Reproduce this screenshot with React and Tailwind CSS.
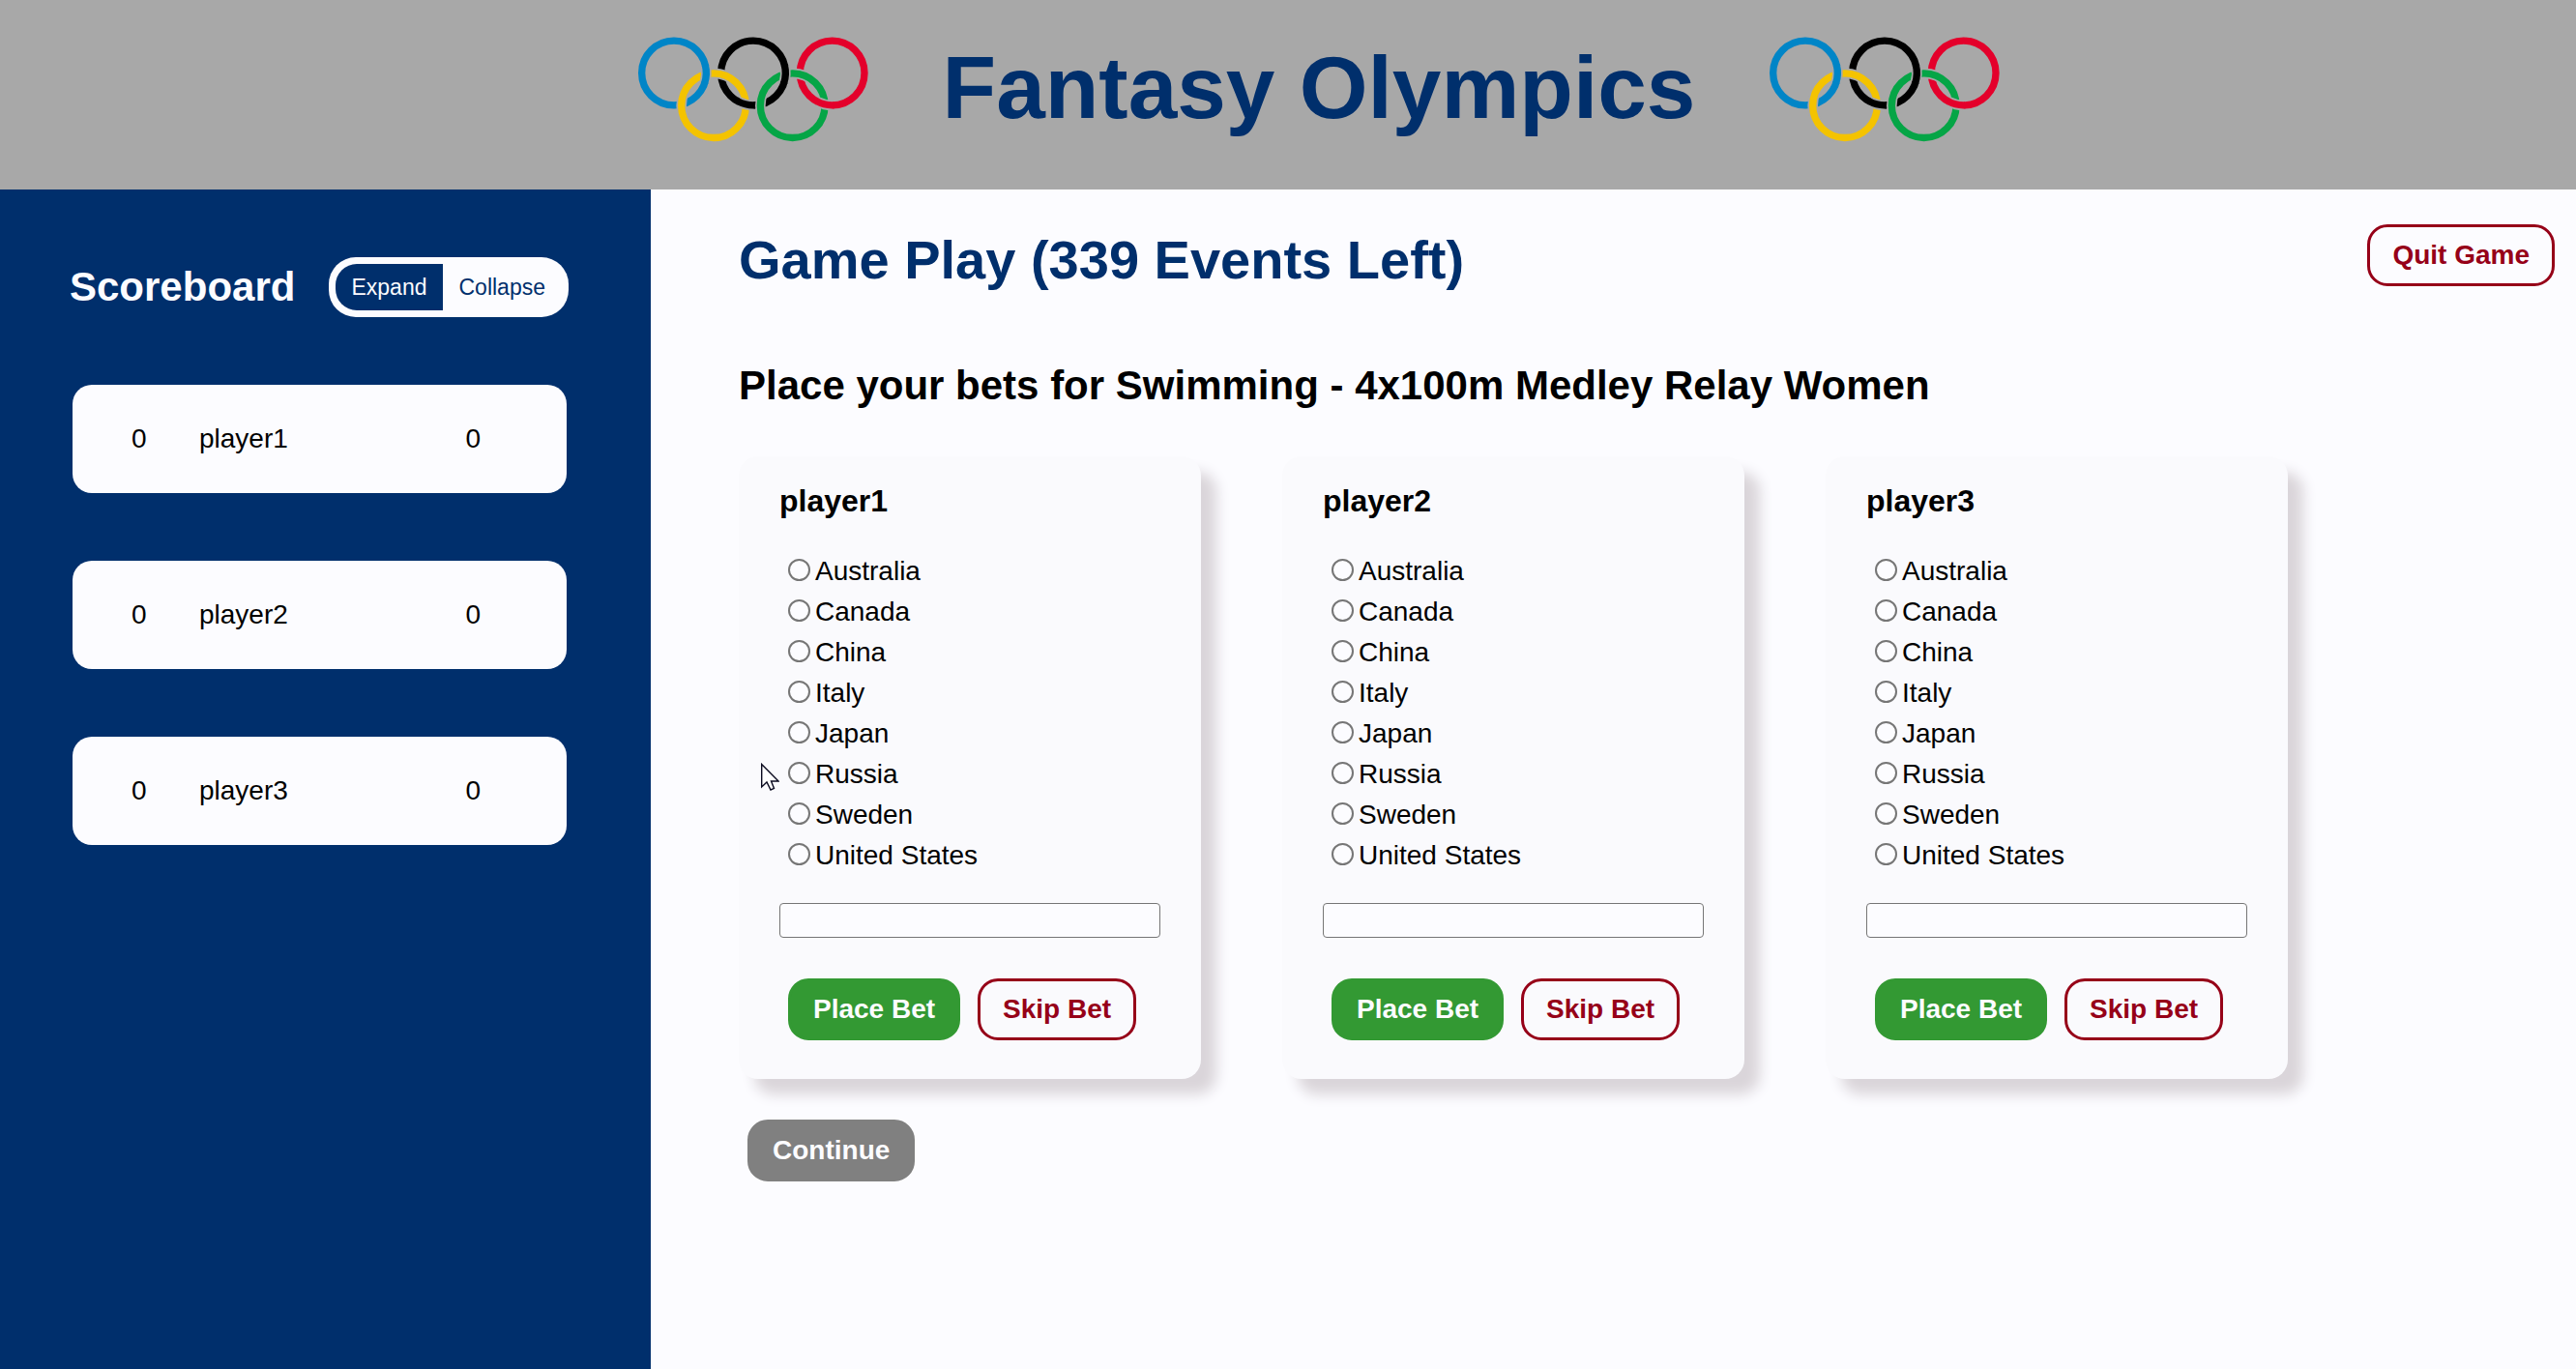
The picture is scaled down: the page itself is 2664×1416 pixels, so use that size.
import { useState } from "react";

const COUNTRIES = ["Australia", "Canada", "China", "Italy", "Japan", "Russia", "Sweden", "United States"];

const PLAYERS = [
  { name: "player1", rank: 0, score: 0 },
  { name: "player2", rank: 0, score: 0 },
  { name: "player3", rank: 0, score: 0 },
];

const HEADER_GREY = "#a8a8a8";

function arc(cx, cy, from, to) {
  const r = 100;
  const point = (deg) => {
    const a = (deg * Math.PI) / 180;
    return `${(cx + r * Math.cos(a)).toFixed(2)} ${(cy + r * Math.sin(a)).toFixed(2)}`;
  };
  return `M${point(from)}A${r} ${r} 0 0 1 ${point(to)}`;
}

// Segment of a ring that passes over its neighbour, with a thin gap on each side.
function Over({ cx, cy, at, color }) {
  return (
    <>
      <path d={arc(cx, cy, at - 14, at + 14)} stroke={HEADER_GREY} strokeWidth="32" />
      <path d={arc(cx, cy, at - 16, at + 16)} stroke={color} strokeWidth="22" />
    </>
  );
}

function Rings() {
  return (
    <svg viewBox="0 0 714 326" className="h-[109px] w-[238px] shrink-0" fill="none" aria-hidden="true">
      <circle cx="111" cy="112" r="100" stroke="#0085c7" strokeWidth="22" />
      <circle cx="357" cy="112" r="100" stroke="#000000" strokeWidth="22" />
      <circle cx="602" cy="112" r="100" stroke="#e4002b" strokeWidth="22" />
      <circle cx="234" cy="213" r="100" stroke={HEADER_GREY} strokeWidth="32" />
      <circle cx="479" cy="213" r="100" stroke={HEADER_GREY} strokeWidth="32" />
      <circle cx="234" cy="213" r="100" stroke="#f4c300" strokeWidth="22" />
      <circle cx="479" cy="213" r="100" stroke="#05a546" strokeWidth="22" />
      <Over cx={111} cy={112} at={2} color="#0085c7" />
      <Over cx={357} cy={112} at={103} color="#000000" />
      <Over cx={357} cy={112} at={2} color="#000000" />
      <Over cx={602} cy={112} at={103} color="#e4002b" />
    </svg>
  );
}

function Header() {
  return (
    <header className="flex items-start justify-center gap-[77px] bg-[#a8a8a8] pt-[38px] pb-[49px] pl-16">
      <Rings />
      <h1 className="text-[91px] leading-[106px] font-bold text-[#002f6c]">Fantasy Olympics</h1>
      <Rings />
    </header>
  );
}

function Scoreboard() {
  const [expanded, setExpanded] = useState(true);
  const on = "bg-[#002f6c] text-[#fcfcff]";
  const off = "text-[#002f6c]";
  return (
    <aside className="w-[673px] shrink-0 bg-[#002f6c] pt-[70px] pr-[85px] pl-[72px]">
      <div className="flex items-center justify-between">
        <h2 className="text-[42px] leading-[48px] font-bold text-[#fcfcff]">Scoreboard</h2>
        <div className="flex rounded-[28px] bg-[#fcfcff] p-[7px] text-[23px] leading-[48px]">
          <button type="button" onClick={() => setExpanded(true)} className={`rounded-l-[22px] px-4 ${expanded ? on : off}`}>
            Expand
          </button>
          <button type="button" onClick={() => setExpanded(false)} className={`rounded-r-[22px] px-[17px] ${expanded ? off : on}`}>
            Collapse
          </button>
        </div>
      </div>
      <ul className="mt-[70px] mr-0.5 ml-[3px] flex flex-col gap-[70px]">
        {PLAYERS.map((p) => (
          <li
            key={p.name}
            className="grid grid-cols-[70px_1fr_auto] rounded-[20px] bg-[#fcfcff] py-10 pr-[89px] pl-[61px] text-[28px] leading-[32px]"
          >
            <span>{p.rank}</span>
            <span>{p.name}</span>
            <span>{p.score}</span>
          </li>
        ))}
      </ul>
    </aside>
  );
}

const button = "rounded-[21px] border-[3px] px-[23px] py-[13px] text-[28px] leading-[32px] font-bold";

function BetCard({ name }) {
  return (
    <form
      onSubmit={(e) => e.preventDefault()}
      className="w-[478px] rounded-[20px] bg-[#fafafd] px-[42px] pt-[27px] pb-10 shadow-[16px_16px_14px_#dad5da]"
    >
      <h3 className="text-[32px] leading-[38px] font-bold">{name}</h3>
      <div className="mt-[33px] pl-[9px]" role="radiogroup" aria-label={`${name} country`}>
        {COUNTRIES.map((c) => (
          <label key={c} className="flex items-center gap-[5px] text-[28px] leading-[42px]">
            <input
              type="radio"
              name={`${name}-country`}
              value={c}
              className="mb-1 size-[23px] appearance-none rounded-full border-2 border-[#767676] bg-[#fcfcff] checked:border-[6px] checked:border-[#0075ff]"
            />
            {c}
          </label>
        ))}
      </div>
      <input
        type="text"
        aria-label={`${name} bet amount`}
        className="mt-7 block h-9 w-full rounded-[4px] border border-[#767676] bg-[#fcfcff] px-1 text-[23px]"
      />
      <div className="mt-[42px] flex gap-[18px] pl-[9px]">
        <button type="submit" className={`${button} border-[#339933] bg-[#339933] text-[#fcfcff]`}>
          Place Bet
        </button>
        <button type="button" className={`${button} border-[#960018] text-[#960018]`}>
          Skip Bet
        </button>
      </div>
    </form>
  );
}

function GamePlay() {
  return (
    <main className="flex-1 pt-9 pr-[22px] pl-[91px]">
      <div className="flex items-start justify-between">
        <h2 className="text-[56px] leading-[74px] font-bold text-[#002f6c]">Game Play (339 Events Left)</h2>
        <button type="button" className={`${button} border-[#960018] text-[#960018]`}>
          Quit Game
        </button>
      </div>
      <h3 className="mt-[69px] text-[42px] leading-[48px] font-bold">
        Place your bets for Swimming - 4x100m Medley Relay Women
      </h3>
      <div className="mt-[49px] flex flex-wrap gap-[84px]">
        {PLAYERS.map((p) => (
          <BetCard key={p.name} name={p.name} />
        ))}
      </div>
      <button type="button" className={`${button} mt-[42px] ml-[9px] border-[#808080] bg-[#808080] text-[#fcfcff]`}>
        Continue
      </button>
    </main>
  );
}

function Pointer() {
  return (
    <svg
      viewBox="0 0 19 29"
      className="pointer-events-none absolute top-[789px] left-[787px] h-[29px] w-[19px]"
      fill="#ffffff"
      stroke="#0b0b20"
      strokeWidth="1.4"
      aria-hidden="true"
    >
      <path d="M.7 1.500V25L6 20l4 8 3.500-1.500L10.500 19H18z" />
    </svg>
  );
}

export default function App() {
  return (
    <div className="relative flex min-h-screen flex-col bg-[#fcfcff] font-['Liberation_Sans',Arial,sans-serif] text-black">
      <Header />
      <div className="flex flex-1">
        <Scoreboard />
        <GamePlay />
      </div>
      <Pointer />
    </div>
  );
}
